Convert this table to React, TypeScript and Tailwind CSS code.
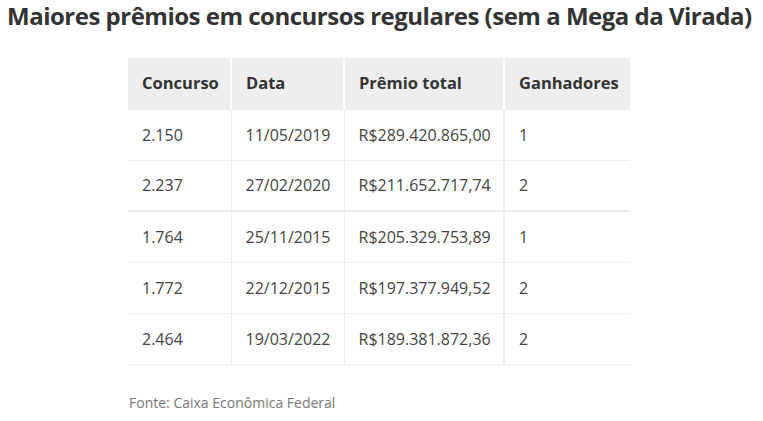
const ROWS = [
  ['2.150', '11/05/2019', 'R$289.420.865,00', '1'],
  ['2.237', '27/02/2020', 'R$211.652.717,74', '2'],
  ['1.764', '25/11/2015', 'R$205.329.753,89', '1'],
  ['1.772', '22/12/2015', 'R$197.377.949,52', '2'],
  ['2.464', '19/03/2022', 'R$189.381.872,36', '2'],
];

const HEADERS = ['Concurso', 'Data', 'Prêmio total', 'Ganhadores'];
const WIDTHS = ['w-[103px]', 'w-[113px]', 'w-[160px]', 'w-[126px]'];

export default function App() {
  return (
    <div className="w-[763px] h-[421px] bg-white font-['Open_Sans',sans-serif] text-[#333]">
      <h1 className="pl-[7px] pt-0 text-[24px] leading-[32px] font-bold tracking-[-0.5px] text-[#333] whitespace-nowrap">
        Maiores prêmios em concursos regulares (sem a Mega da Virada)
      </h1>
      <div className="pl-[128px] pt-[26px]">
        <table className="border-collapse table-fixed w-[502px]">
          <thead>
            <tr className="bg-[#eeeeee] h-[51px]">
              {HEADERS.map((h, i) => (
                <th
                  key={h}
                  className={`${WIDTHS[i]} text-left font-bold text-[16.5px] px-[14px] text-[#333] ${i > 0 ? 'border-l-2 border-white' : ''}`}
                >
                  {h}
                </th>
              ))}
            </tr>
          </thead>
          <tbody>
            {ROWS.map((r, ri) => (
              <tr
                key={ri}
                className={`h-[51px] ${ri === 2 ? 'border-t-2 border-[#e9e9e9]' : 'border-t border-[#eeeeee]'} ${ri === 4 ? 'border-b border-[#eeeeee]' : ''}`}
              >
                {r.map((c, ci) => (
                  <td
                    key={ci}
                    className={`text-[16px] px-[14px] text-[#444] whitespace-nowrap ${ci === 3 ? 'border-l-2 border-[#eeeeee]' : ci > 0 ? 'border-l border-[#eeeeee]' : ''}`}
                  >
                    {c}
                  </td>
                ))}
              </tr>
            ))}
          </tbody>
        </table>
      </div>
      <p className="pl-[129px] pt-[27px] text-[14px] text-[#777]">Fonte: Caixa Econômica Federal</p>
    </div>
  );
}
